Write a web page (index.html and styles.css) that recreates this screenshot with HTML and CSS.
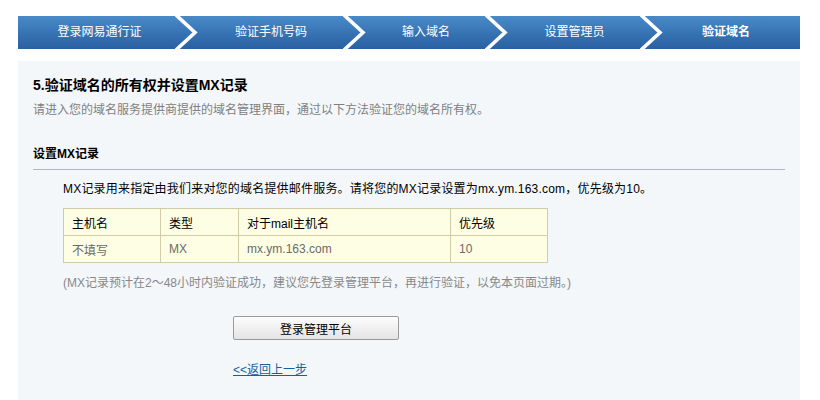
FILE: index.html
```html
<!DOCTYPE html>
<html lang="zh-CN">
<head>
  <meta charset="UTF-8">
  <title>验证域名</title>
  <link rel="stylesheet" href="styles.css">
</head>
<body>
  <div class="wrap">
    <div class="steps">
      <div class="step s1">登录网易通行证</div>
      <svg class="chev" viewBox="0 0 24 33"><polyline points="1,-1 20,16.5 1,34"/></svg>
      <div class="step s2">验证手机号码</div>
      <svg class="chev" viewBox="0 0 24 33"><polyline points="1,-1 20,16.5 1,34"/></svg>
      <div class="step s3">输入域名</div>
      <svg class="chev" viewBox="0 0 24 33"><polyline points="1,-1 20,16.5 1,34"/></svg>
      <div class="step s4">设置管理员</div>
      <svg class="chev" viewBox="0 0 24 33"><polyline points="1,-1 20,16.5 1,34"/></svg>
      <div class="step s5 current">验证域名</div>
    </div>

    <div class="panel">
      <h2 class="title">5.验证域名的所有权并设置MX记录</h2>
      <p class="sub">请进入您的域名服务提供商提供的域名管理界面，通过以下方法验证您的域名所有权。</p>

      <h3 class="sec">设置MX记录</h3>
      <div class="body">
        <p class="desc">MX记录用来指定由我们来对您的域名提供邮件服务。请将您的MX记录设置为mx.ym.163.com，优先级为10。</p>
        <table class="mx">
          <tr class="head">
            <td class="c1">主机名</td><td class="c2">类型</td><td class="c3">对于mail主机名</td><td class="c4">优先级</td>
          </tr>
          <tr>
            <td>不填写</td><td>MX</td><td>mx.ym.163.com</td><td>10</td>
          </tr>
        </table>
        <p class="note">(MX记录预计在2～48小时内验证成功，建议您先登录管理平台，再进行验证，以免本页面过期。)</p>
      </div>

      <div class="actions">
        <button class="btn">登录管理平台</button>
        <a class="back" href="#">&lt;&lt;返回上一步</a>
      </div>
    </div>
  </div>
</body>
</html>
```

FILE: styles.css
```css
* { box-sizing: border-box; margin: 0; padding: 0; }
body { background: #fff; font-family: "Liberation Sans", "Noto Sans CJK SC", sans-serif; font-size: 12px; color: #000; }
.wrap { width: 782px; margin-left: 18px; padding-top: 16px; }

/* 步骤条 */
.steps {
  display: flex; height: 33px;
  background: linear-gradient(#4a8ac8, #3470b0 60%, #2a60a2);
  color: #fff; font-size: 12px; line-height: 33px;
}
.step { text-align: center; }
.s1 { width: 157px; padding-left: 6px; }
.s2 { width: 144px; }
.s3 { width: 118px; }
.s4 { width: 131px; }
.s5 { width: 136px; padding-right: 12px; }
.step.current { font-weight: bold; }
.chev { width: 24px; height: 33px; flex: none; }
.chev polyline { fill: none; stroke: #fff; stroke-width: 3.6; stroke-linejoin: miter; }

/* 内容 */
.panel { margin-top: 12px; background: #f4f7fa; padding: 14px 15px 24px; min-height: 340px; }
.title { font-size: 14px; font-weight: bold; line-height: 20px; }
.sub { color: #808080; line-height: 18px; margin-top: 6px; }
.sec { font-size: 12px; font-weight: bold; line-height: 18px; margin-top: 26px;
  padding-bottom: 6px; border-bottom: 1px solid #a7b9ca; }
.body { padding-left: 30px; }
.desc { line-height: 18px; margin-top: 10px; letter-spacing: 0.2px; }
.mx { border-collapse: collapse; background: #fefee4; margin-top: 10px; }
.mx td { border: 1px solid #cfcca6; height: 27px; padding: 0 8px; }
.mx .c1 { width: 97px; }
.mx .c2 { width: 78px; }
.mx .c3 { width: 212px; }
.mx .c4 { width: 97px; }
.mx tr:last-child td { color: #6a6a6a; }
.note { color: #888; line-height: 18px; margin-top: 11px; }

.actions { padding-left: 200px; margin-top: 24px; display: flex; flex-direction: column; align-items: flex-start; gap: 22px; }
.btn {
  width: 166px; height: 24px; font: inherit; color: #000; cursor: pointer;
  border: 1px solid #9a9a9a; border-radius: 2px;
  background: linear-gradient(#fdfdfd, #f0f0f0 50%, #e4e4e4);
}
.back { color: #1b5d9c; text-decoration: underline; line-height: 16px; }
```
